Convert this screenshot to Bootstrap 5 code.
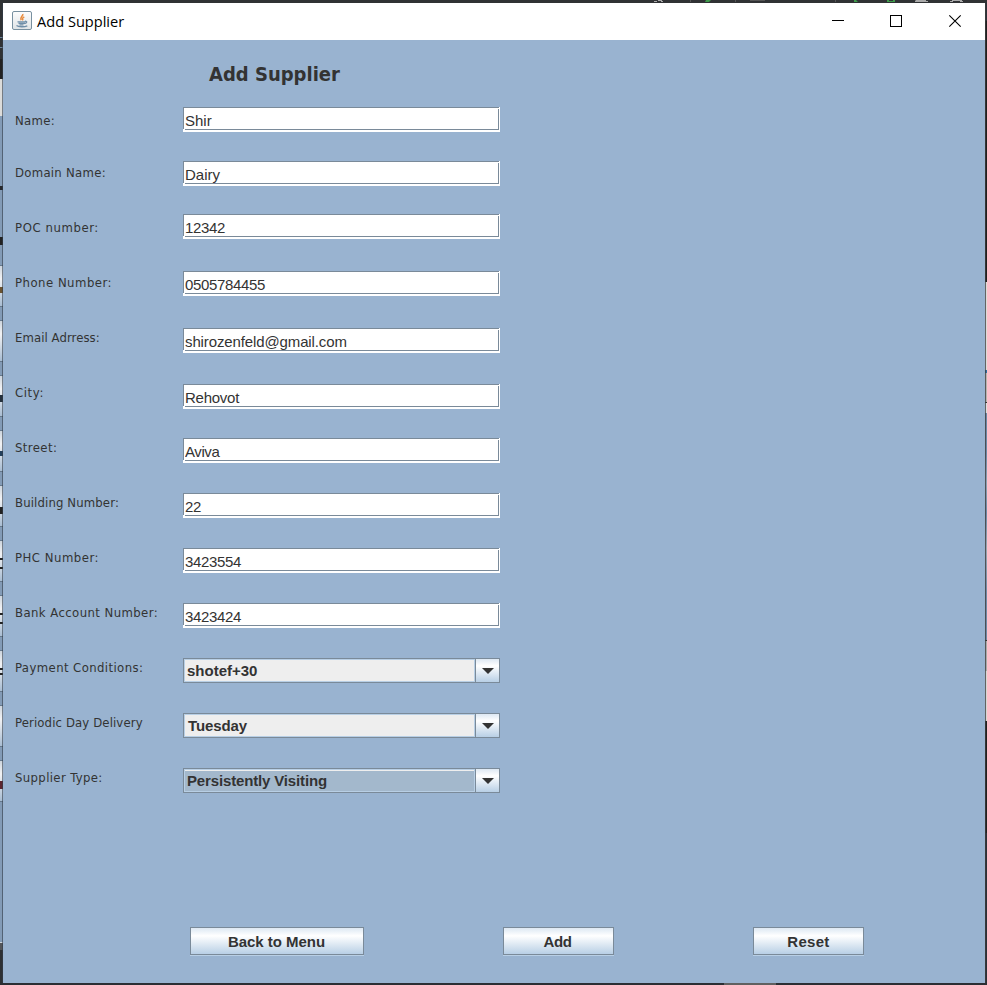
<!DOCTYPE html>
<html lang="en">
<head>
<meta charset="utf-8">
<meta name="viewport" content="width=device-width, initial-scale=1">
<title>Add Supplier</title>
<link rel="stylesheet" href="https://cdn.jsdelivr.net/npm/bootstrap@5.3.0/dist/css/bootstrap.min.css">
<style>
:root{--pane:#99b3d0;--edge:#7a8a99;--ink:#333}
body{background:#2d3033;font-family:"Liberation Sans",Arial,sans-serif;color:var(--ink);overflow:hidden}
.desk-top{height:3px}
.desk-top svg,.desk-bottom svg{display:block}
.desk-bottom{height:2px}
.desk-left{width:3px;background:
  linear-gradient(90deg,transparent 2px,rgba(50,60,72,.6) 2px),
  linear-gradient(transparent 234px,#222 234px 242px,transparent 242px 284px,#6b5330 284px 290px,transparent 290px 392px,#24303c 392px 399px,transparent 399px 448px,#24405c 448px 453px,transparent 453px 504px,#222 504px 511px,transparent 511px 555px,#222 555px 557px,transparent 557px 564px,#222 564px 566px,transparent 566px 610px,#222 610px 612px,transparent 612px 619px,#222 619px 621px,transparent 621px 665px,#222 665px 667px,transparent 667px 670px,#222 670px 672px,transparent 672px 778px,#5c2630 778px 786px,transparent 786px),
  linear-gradient(#303234 0 34px,#6a8298 34px 35px,#303234 35px 44px,#6a8298 44px 45px,#303234 45px 56px,#222 56px 76px,#dcdcda 76px 113px,#839bb6 113px 183px,#26282c 183px 187px,#839bb6 187px 262px,transparent 262px 801px,#839bb6 801px 939px,#cfd6dd 939px 940px,#54575b 940px 947px,#2d3033 947px),
  repeating-linear-gradient(#65788c 0 1px,#cdd5dd 1px,#f1f2f4 14px,#a9bdd2 41px,#65788c 41px 42px,#839bb6 42px 55px) 0 262px}
.desk-right{width:2px;background:
  linear-gradient(90deg,rgba(60,60,60,.75) 1px,transparent 1px),
  linear-gradient(#2b3037 0 18px,#1f1f1f 18px 279px,#dedbd7 279px 367px,#2c6ea3 367px 370px,#b8b4b0 370px 399px,#333 399px 400px,#ddd 400px 410px,#6d88a5 410px 450px,#8ea0b1 480px,#6d88a5 510px,#9aa5b0 545px,#7189a5 590px 637px,#333 637px 638px,#aaa 638px 668px,#d8d6d3 668px 718px,#202020 718px 830px,#2b3037 830px)}
.title-bar{height:37px;font:14.6px/37px "Open Sans","Noto Sans",sans-serif;color:#000;padding-left:9px}
.app-icon{margin:8px 5px 0 0}
.win-glyph{width:59px}
.pane{background:var(--pane)}
.form-title{font:bold 20px/26px "DejaVu Sans Condensed","DejaVu Sans",sans-serif;padding:21px 0 0 206px;height:53px}
.form-line{height:55px;padding-left:12px}
.form-line:first-child{height:52px}
.line-label{width:168px;flex:none;font:13px/55px "DejaVu Sans Condensed","DejaVu Sans",sans-serif;white-space:nowrap;color:#333}
.text-box,.combo{width:317px;height:25px;flex:none;margin-top:18px;font-size:15px}
.text-box{border:0;border-radius:0;outline:0;padding:2px 0 1px 2px;color:var(--ink);line-height:22px;background:
  linear-gradient(var(--edge),var(--edge)) 0 0/316px 1px no-repeat,
  linear-gradient(var(--edge),var(--edge)) 0 0/1px 22px no-repeat,
  linear-gradient(var(--edge),var(--edge)) 2px 22px/314px 1px no-repeat,
  linear-gradient(var(--edge),var(--edge)) 315px 2px/1px 21px no-repeat,#fff}
.combo{border:1px solid var(--edge);font-weight:700}
.combo-value{border:1px solid #b8cfe5;background:#eee;padding-left:2px;line-height:21px}
.combo.focused .combo-value{background:#a3b8cc;box-shadow:inset 0 1px #eee}
.combo-arrow{width:24px;border-left:1px solid var(--edge);background:linear-gradient(#dde8f3,#fff 30%,#b8cfe5)}
.up-4{margin-top:14px}.up-2{margin-top:16px}.down-1{margin-top:19px}
.num{letter-spacing:-.34px}
.steel{border:1px solid var(--edge);border-radius:0;box-shadow:0 1px #b8cfe5;background:linear-gradient(#dde8f3,#fff 30%,#b8cfe5);height:28px;padding:1px 0 0;font-size:15px;font-weight:700;line-height:26px;color:var(--ink);width:111px}
.steel.wide{width:174px;letter-spacing:-.04px;padding-right:1px}
.steel.short{letter-spacing:-.4px;padding-right:2px}
.actions{margin:122px 0 0 187px}
.gap-a{margin-left:139px}
</style>
<script src="https://cdn.jsdelivr.net/npm/bootstrap@5.3.0/dist/js/bootstrap.bundle.min.js"></script>
</head>
<body>
<div class="d-flex flex-column vh-100">
  <div class="desk-top"><svg width="987" height="3"><path fill="#303234" d="M0 0h987v3H0z"/><path fill="#aaa" d="M654 1h3v1h-3zM658 0h4v1h-4zM661 1h2v1h-2zM916 0h10v1h2v1h-13v-1zM952 0h10v1h-10zM950 1h3v1h-3zM960 1h3v1h-3z"/><path fill="#3f9b4b" d="M706 0h5l-2 2h-4zM854 0h2l2 2h-4zM887 0h2v2h-2zM893 0h2v2h-2zM889 1h4v1h-4z"/><path fill="#555" d="M690 0h1v2h-1zM735 0h1v2h-1zM750 0h15v1h-15zM835 0h1v2h-1z"/></svg></div>
  <div class="d-flex flex-grow-1">
    <div class="desk-left"></div>
    <div class="flex-grow-1 d-flex flex-column">
      <header class="title-bar bg-white d-flex">
        <svg class="app-icon" width="20" height="19" viewBox="0 0 20 19"><defs><linearGradient id="tile" x2="0" y2="1"><stop stop-color="#fdfdfd"/><stop offset="1" stop-color="#dfe3e6"/></linearGradient></defs><rect x=".5" y=".5" width="19" height="18" rx="1.5" fill="url(#tile)" stroke="#7890a0"/><path d="M10.800 3C11.500 5 7.500 6 9 9.300M12.300 5.800c-2 1-2.200 2-1.300 3.500" fill="none" stroke="#e88a3c" stroke-width="1.500"/><path d="M5.500 10.800h7.500M6.500 12.300h6M7.500 13.800h4M13 10.300c2.500-.4 2.200 2-.5 2.200M4.500 14.600c2 1.500 8 1.500 10.800.2" fill="none" stroke="#6f8ea8" stroke-width="1.300"/></svg>
        <span>Add Supplier</span>
        <div class="d-flex ms-auto align-items-center">
          <svg class="win-glyph" height="37" shape-rendering="crispEdges"><path d="M24 17.500h12" stroke="#000"/></svg>
          <svg class="win-glyph" height="37" shape-rendering="crispEdges"><path d="M23.500 12.500h11v11h-11z" fill="none" stroke="#000"/></svg>
          <svg class="win-glyph" height="37"><path d="M23.300 12.300l11.400 11.400M34.700 12.300L23.300 23.700" fill="none" stroke="#000" stroke-width="1.100"/></svg>
        </div>
      </header>
      <main class="pane flex-grow-1">
        <h1 class="form-title m-0">Add Supplier</h1>
        <form>
          <div class="form-line d-flex"><label class="line-label" style="letter-spacing:.3px">Name:</label><input class="text-box up-4" value="Shir"></div>
          <div class="form-line d-flex"><label class="line-label" style="letter-spacing:.28px">Domain Name:</label><input class="text-box up-2" value="Dairy"></div>
          <div class="form-line d-flex"><label class="line-label" style="letter-spacing:.58px">POC number:</label><input class="text-box up-4 num" value="12342"></div>
          <div class="form-line d-flex"><label class="line-label" style="letter-spacing:.49px">Phone Number:</label><input class="text-box up-2 num" value="0505784455"></div>
          <div class="form-line d-flex"><label class="line-label" style="letter-spacing:.07px">Email Adrress:</label><input class="text-box" style="letter-spacing:-.12px" value="shirozenfeld@gmail.com"></div>
          <div class="form-line d-flex"><label class="line-label" style="letter-spacing:.6px">City:</label><input class="text-box down-1" style="letter-spacing:-.25px" value="Rehovot"></div>
          <div class="form-line d-flex"><label class="line-label" style="letter-spacing:.4px">Street:</label><input class="text-box" style="letter-spacing:-.4px" value="Aviva"></div>
          <div class="form-line d-flex"><label class="line-label" style="letter-spacing:.13px">Building Number:</label><input class="text-box num" value="22"></div>
          <div class="form-line d-flex"><label class="line-label" style="letter-spacing:.5px">PHC Number:</label><input class="text-box num" value="3423554"></div>
          <div class="form-line d-flex"><label class="line-label" style="letter-spacing:.42px">Bank Account Number:</label><input class="text-box num" value="3423424"></div>
          <div class="form-line d-flex"><label class="line-label" style="letter-spacing:.4px">Payment Conditions:</label>
            <div class="combo d-flex"><div class="combo-value flex-grow-1">shotef+30</div><div class="combo-arrow"><svg class="d-block" width="23" height="23"><path fill="#333" d="M6 9h12l-6 6z"/></svg></div></div></div>
          <div class="form-line d-flex"><label class="line-label" style="letter-spacing:.12px">Periodic Day Delivery</label>
            <div class="combo d-flex"><div class="combo-value flex-grow-1" style="padding-left:3px;letter-spacing:-.1px">Tuesday</div><div class="combo-arrow"><svg class="d-block" width="23" height="23"><path fill="#333" d="M6 9h12l-6 6z"/></svg></div></div></div>
          <div class="form-line d-flex"><label class="line-label" style="letter-spacing:.36px">Supplier Type:</label>
            <div class="combo focused d-flex"><div class="combo-value flex-grow-1" style="letter-spacing:-.15px">Persistently Visiting</div><div class="combo-arrow"><svg class="d-block" width="23" height="23"><path fill="#333" d="M6 9h12l-6 6z"/></svg></div></div></div>
        </form>
        <div class="actions d-flex">
          <button type="button" class="btn steel wide">Back to Menu</button>
          <button type="button" class="btn steel short gap-a">Add</button>
          <button type="button" class="btn steel gap-a" style="letter-spacing:.3px">Reset</button>
        </div>
      </main>
    </div>
    <div class="desk-right"></div>
  </div>
  <div class="desk-bottom"><svg width="987" height="2"><path fill="#2b2e33" d="M0 0h987v2H0z"/><path fill="#606060" d="M724 0h52v2h-52z"/></svg></div>
</div>
</body>
</html>
